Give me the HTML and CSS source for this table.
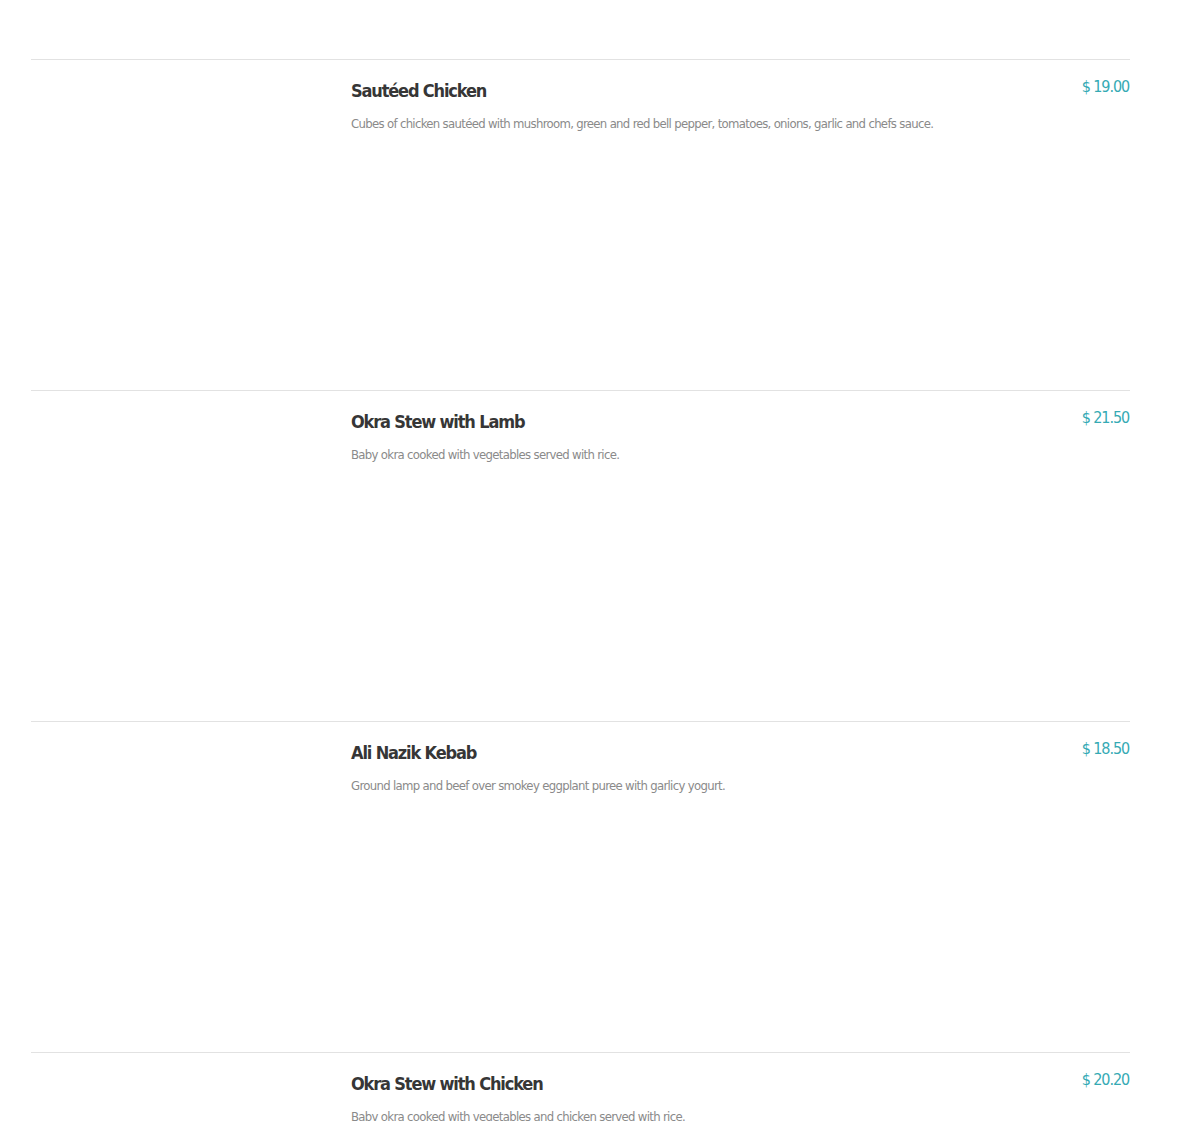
FILE: index.html
```html
<!DOCTYPE html>
<html>
<head>
<meta charset="utf-8">
<link rel="stylesheet" href="styles.css">
</head>
<body>
<div class="menu">
  <div class="item">
    <div class="thumb"></div>
    <div class="info">
      <div class="head"><h3 class="name">Sautéed Chicken</h3><span class="price">$ 19.00</span></div>
      <p class="desc">Cubes of chicken sautéed with mushroom, green and red bell pepper, tomatoes, onions, garlic and chefs sauce.</p>
    </div>
  </div>
  <div class="item">
    <div class="thumb"></div>
    <div class="info">
      <div class="head"><h3 class="name">Okra Stew with Lamb</h3><span class="price">$ 21.50</span></div>
      <p class="desc">Baby okra cooked with vegetables served with rice.</p>
    </div>
  </div>
  <div class="item">
    <div class="thumb"></div>
    <div class="info">
      <div class="head"><h3 class="name">Ali Nazik Kebab</h3><span class="price">$ 18.50</span></div>
      <p class="desc">Ground lamp and beef over smokey eggplant puree with garlicy yogurt.</p>
    </div>
  </div>
  <div class="item">
    <div class="thumb"></div>
    <div class="info">
      <div class="head"><h3 class="name">Okra Stew with Chicken</h3><span class="price">$ 20.20</span></div>
      <p class="desc">Baby okra cooked with vegetables and chicken served with rice.</p>
    </div>
  </div>
</div>
</body>
</html>
```
FILE: styles.css
```css
html, body {
  margin: 0;
  padding: 0;
  background: #fff;
}
body {
  font-family: "DejaVu Sans Condensed", "DejaVu Sans", sans-serif;
  font-stretch: condensed;
  overflow: hidden;
}
.menu {
  width: 1099px;
  margin-left: 31px;
  padding-top: 59px;
}
.item {
  display: flex;
  border-top: 1px solid #e2e2e2;
  height: 330px;
}
.thumb {
  width: 320px;
  flex: none;
}
.info {
  flex: 1;
  padding-top: 19px;
}
.head {
  display: flex;
  justify-content: space-between;
  align-items: flex-start;
}
.name {
  margin: 0;
  font-size: 18px;
  font-weight: 700;
  letter-spacing: -1.15px;
  color: #363636;
  line-height: 24px;
}
.price {
  font-size: 16px;
  letter-spacing: -1.1px;
  color: #35aab4;
  line-height: 20px;
  margin-top: -2px;
  margin-right: 1px;
}
.desc {
  margin: 12px 0 0;
  font-size: 13px;
  letter-spacing: -0.68px;
  color: #8a8a8a;
  line-height: 18px;
}
```
